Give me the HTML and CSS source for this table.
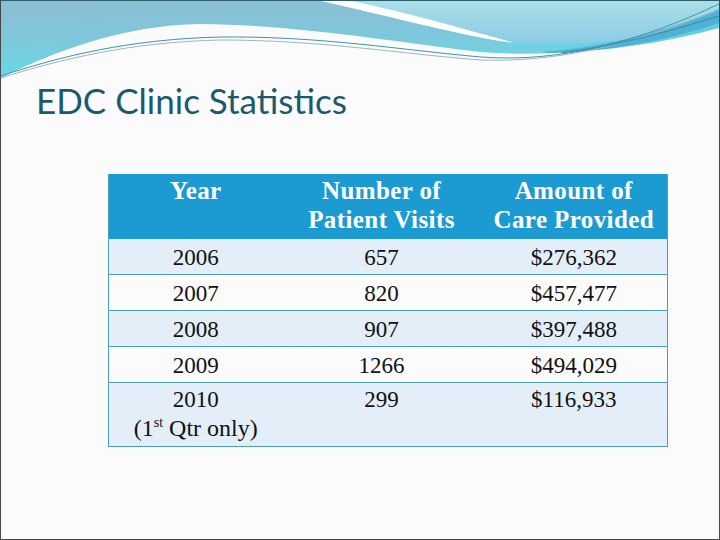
FILE: index.html
```html
<!DOCTYPE html>
<html>
<head>
<meta charset="utf-8">
<link rel="stylesheet" href="styles.css">
</head>
<body>
<div class="slide">
  <svg class="wave" viewBox="0 0 718 79" width="718" height="79" preserveAspectRatio="none">
    <defs>
      <linearGradient id="gTop" x1="0" y1="0" x2="0.15" y2="1">
        <stop offset="0" stop-color="#8dbdd4"/>
        <stop offset="0.55" stop-color="#7cc9dc"/>
        <stop offset="1" stop-color="#5fdde9"/>
      </linearGradient>
      <linearGradient id="gLight" x1="0" y1="0" x2="0" y2="1">
        <stop offset="0" stop-color="#aadfe9"/>
        <stop offset="1" stop-color="#8ccbe6"/>
      </linearGradient>
      <linearGradient id="gCyan" x1="0" y1="0" x2="1" y2="0">
        <stop offset="0" stop-color="#74dbe8"/>
        <stop offset="1" stop-color="#62cde4"/>
      </linearGradient>
    </defs>
    <rect x="0" y="0" width="718" height="79" fill="url(#gTop)"/>
    <path d="M330,0 C400,14 470,34 520,44 C560,50 600,52 640,48 C680,42 700,35 718,26 L718,0 Z" fill="url(#gCyan)"/>
    <path d="M348,0 L718,0 L718,10 C690,26 640,40 585,42 C555,43 530,42 512,41 C470,30 400,10 348,0 Z" fill="url(#gLight)"/>
    <path d="M540,51 C610,46 670,28 718,8 L718,22 C680,36 610,50 560,53 Z" fill="#4fb1d3"/>
    <path d="M320,0 L350,0 C405,11 470,30 514,42 C470,37 400,18 320,0 Z" fill="#ffffff"/>
    <path d="M0,79 L0,77 C50,52 120,24 200,23 C300,24 400,42 480,51 C560,57 650,46 718,27 L718,79 Z" fill="#fbfbfb"/>
    <path d="M0,75 C60,55 130,38 220,36 C320,35 400,49 480,56 C560,62 640,40 718,3" fill="none" stroke="#3c98a6" stroke-width="1"/>
    <path d="M0,77 C60,58 130,41 220,39 C320,39 400,53 480,59 C565,62 645,38 718,9" fill="none" stroke="#9cb6bc" stroke-width="1"/>
    <path d="M560,52 C620,44 670,30 718,15" fill="none" stroke="#2f8fa6" stroke-width="1"/>
  </svg>
  <h1 class="title">EDC Clinic Statistics</h1>
  <table class="stats">
    <colgroup>
      <col class="c1"><col class="c2"><col class="c3">
    </colgroup>
    <thead>
      <tr class="head">
        <th>Year</th>
        <th>Number of<br>Patient Visits</th>
        <th>Amount of<br>Care Provided</th>
      </tr>
    </thead>
    <tbody>
      <tr class="shade"><td>2006</td><td>657</td><td>$276,362</td></tr>
      <tr><td>2007</td><td>820</td><td>$457,477</td></tr>
      <tr class="shade"><td>2008</td><td>907</td><td>$397,488</td></tr>
      <tr><td>2009</td><td>1266</td><td>$494,029</td></tr>
      <tr class="shade last"><td>2010<br><span class="note">(1<sup>st</sup> Qtr only)</span></td><td>299</td><td>$116,933</td></tr>
    </tbody>
  </table>
</div>
</body>
</html>
```

FILE: styles.css
```css
html, body {
  margin: 0;
  padding: 0;
  background: #fbfbfb;
}

.slide {
  width: 720px;
  height: 540px;
  box-sizing: border-box;
  border: 1px solid #474747;
  border-top-color: #2b5e6c;
  background: #fbfbfb;
  display: flex;
  flex-direction: column;
  overflow: hidden;
}

.wave {
  display: block;
  flex: none;
}

.title {
  margin: 0 0 0 35px;
  font-family: "Lato", "Liberation Sans", sans-serif;
  font-weight: 400;
  font-size: 35px;
  line-height: 40px;
  color: #1b5a6d;
}

.stats {
  margin: 54px 0 0 107px;
  width: 559px;
  border-collapse: collapse;
  table-layout: fixed;
  font-family: "Liberation Serif", "Times New Roman", serif;
  font-variant-numeric: oldstyle-nums;
  color: #111;
  border: 1px solid #4b9fb2;
  border-top: none;
}

.c1 { width: 174px; }
.c2 { width: 198px; }
.c3 { width: 187px; }

.head {
  height: 65px;
  background: #1b9bd1;
}

.head th {
  color: #ffffff;
  font-weight: bold;
  font-size: 25px;
  letter-spacing: 0.4px;
  line-height: 29px;
  vertical-align: top;
  padding: 2px 0 0 0;
  text-align: center;
}

.stats td {
  font-size: 23px;
  line-height: 29px;
  vertical-align: top;
  text-align: center;
  padding: 4px 0 0 0;
  height: 31px;
  border-top: 1px solid #4b9fb2;
}

.stats tbody tr:first-child td {
  border-top: none;
}

.shade {
  background: #e3eef8;
}

.stats .last td {
  height: 61px;
  padding-top: 2px;
}

.note {
  font-size: 24px;
}

.note sup {
  font-size: 14px;
  line-height: 0;
  vertical-align: 9px;
}
```
